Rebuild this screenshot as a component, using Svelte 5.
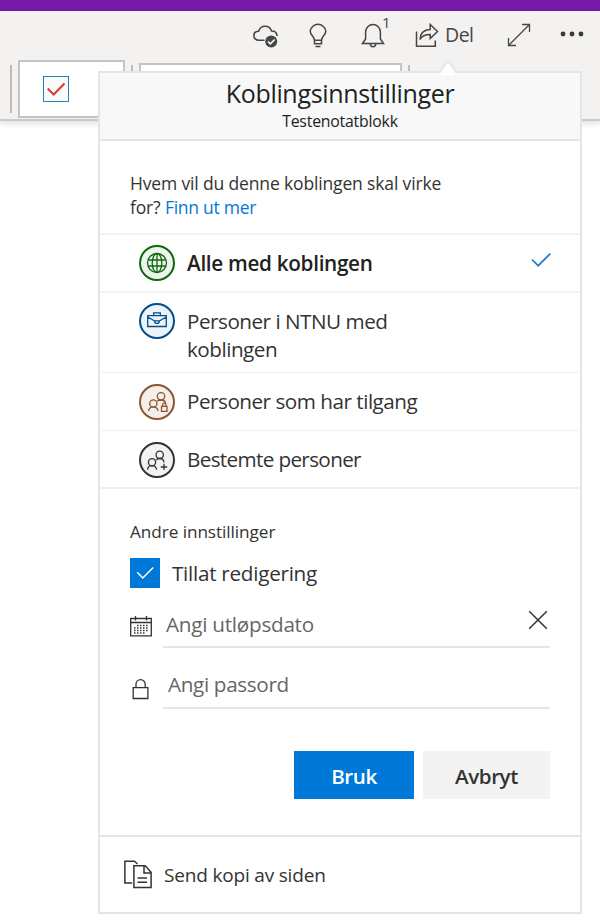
<script>
  const options = [
    { id: 'all', icon: 'globe', label: 'Alle med koblingen', color: '#0b6a0b', bg: '#f0f4f0', selected: true },
    { id: 'org', icon: 'case', label: 'Personer i NTNU med koblingen', color: '#004e8c', bg: '#eef3f7' },
    { id: 'existing', icon: 'lock', label: 'Personer som har tilgang', color: '#8e562e', bg: '#f5efeb' },
    { id: 'specific', icon: 'plus', label: 'Bestemte personer', color: '#333333', bg: '#f2f2f2' }
  ];
</script>

<div class="page">
  <div class="titlebar"></div>
  <header class="toolbar">
    <div class="actions">
      <svg class="cloud" width="28" height="28" viewBox="0 0 28 28" fill="none" stroke="#484644" stroke-width="1.6">
        <path d="M12.5 18.2H6.6C3.8 18.2 1.9 16.2 1.9 13.7c0-2.700 2-4.500 4.700-4.500C7.500 6.200 10 4.200 13 4.200c3.300 0 5.700 2 6.500 4.800 3.300 0 5.500 2 5.500 5" />
        <circle cx="19.200" cy="19.500" r="6" fill="#484644" stroke="none" />
        <path d="M16 19.500l2.400 2.400 4.300-4.400" stroke="#fff" />
      </svg>
      <svg class="bulb" width="22" height="28" viewBox="0 0 22 28" fill="none" stroke="#484644" stroke-width="1.5">
        <path d="M7.500 18.500c0-4.500-4.300-5-4.300-9.500a7.900 7.900 0 0 1 15.600 0c0 4.500-4.300 5-4.300 9.500v3.300h-7zM7.500 18.300h7M8.500 24.500h5" />
      </svg>
      <div class="bell">
        <svg width="24" height="28" viewBox="0 0 24 28" fill="none" stroke="#484644" stroke-width="1.5">
          <path d="M1.500 21.500L4.600 17V10a7.300 7.300 0 0 1 14.800 0V17l3.100 4.500zM9.300 22a2.700 2.700 0 0 0 5.400 0" />
        </svg>
        <span class="count">1</span>
      </div>
      <svg class="share" width="26" height="28" viewBox="0 0 26 28" fill="none" stroke="#484644" stroke-width="1.500">
        <path d="M2.500 9.500V24.300H21.300V18.500" />
        <path d="M6 17.500C6.300 10.500 10 7.700 16.200 7.400V2.500l7.300 7-7.300 7v-4c-4.500-.1-7.900 1-10.200 5z" />
      </svg>
      <span class="del">Del</span>
      <svg class="expand" width="26" height="28" viewBox="0 0 26 28" fill="none" stroke="#484644" stroke-width="1.300">
        <path d="M2.500 24.500L23.500 3.500M16 3.500h7.500v7.500M2.500 17v7.500h7.500" />
      </svg>
      <svg class="dots" width="26" height="28" viewBox="0 0 26 28" fill="#3b3a39">
        <circle cx="4" cy="13" r="2.400" /><circle cx="13" cy="13" r="2.400" /><circle cx="22" cy="13" r="2.400" />
      </svg>
    </div>
    <div class="ribbon">
      <i class="sep"></i>
      <div class="tag">
        <svg width="26" height="26" viewBox="0 0 26 26" fill="none">
          <rect x=".5" y=".5" width="25" height="25" fill="#fafafa" stroke="#1f86a3" />
          <path d="M4.700 12.500l6 6L21.500 7.500" stroke="#d43c2c" stroke-width="2" />
        </svg>
      </div>
      <i class="sep second"></i>
      <div class="search"></div>
      <i class="sep third"></i>
    </div>
  </header>

  <section class="panel">
    <svg class="caret" width="20" height="15" viewBox="0 0 20 15">
      <path d="M1.500 13L10 1l8.500 12v2h-17z" fill="#fff" />
      <path d="M1.500 13L9.200 1.500h1.600L18.500 13" fill="none" stroke="#e5e5e5" stroke-width="1.800" />
    </svg>
    <div class="head">
      <h1>Koblingsinnstillinger</h1>
      <h2>Testenotatblokk</h2>
    </div>

    <p class="intro">Hvem vil du denne koblingen skal virke<br />for? <span class="link">Finn ut mer</span></p>

    <ul>
      {#each options as o (o.id)}
        <li class={o.id}>
          <svg class="round" width="36" height="36" viewBox="0 0 36 36" fill="none" stroke={o.color} stroke-width="1.300">
            <circle cx="18" cy="18" r="17" fill={o.bg} stroke-width="2" />
            {#if o.icon === 'globe'}
              <circle cx="18" cy="18" r="9.500" />
              <ellipse cx="18" cy="18" rx="4.800" ry="9.500" />
              <path d="M18 8.500v19M9.200 15h17.600M9.200 21h17.600" />
            {:else if o.icon === 'case'}
              <path d="M8.700 12.700h18.600v10.800H8.700zM14.700 12.500v-2.700h6.600v2.700M8.700 14l7 4M27.300 14l-7 4M15.800 17.800h4.400v1.500l-1 1h-2.400l-1-1z" />
            {:else if o.icon === 'lock'}
              <circle cx="22" cy="12.300" r="3.700" />
              <circle cx="14.300" cy="19.500" r="3.600" />
              <path d="M9.600 27c.3-2.700 2-4.100 4.700-4.100s4.300 1.400 4.700 4.100M18.200 17.300c.8-.8 2-1.300 3.800-1.300 2.600 0 4.200 1 4.700 3M22.500 22.300h5.500v5h-5.500zM23.700 22.300v-1.600a1.600 1.600 0 0 1 3.200 0v1.600" />
            {:else}
              <circle cx="20.700" cy="12.800" r="3.700" />
              <circle cx="13" cy="20.300" r="3.600" />
              <path d="M8.500 27.700c.3-2.700 1.900-4 4.500-4s4.200 1.300 4.600 4M17 18c.8-.9 2-1.500 3.700-1.500 2.600 0 4 1.400 4.300 3.800M25 21.700v6.400M21.800 25h6.400" />
            {/if}
          </svg>
          <span class="name">{o.label}</span>
          {#if o.selected}
            <svg class="tick" width="22" height="18" viewBox="0 0 22 18" fill="none" stroke="#1a7fd4" stroke-width="1.700">
              <path d="M2 8.500l6.200 6.200L20.300 2.600" />
            </svg>
          {/if}
        </li>
      {/each}
    </ul>

    <div class="settings">
      <h3>Andre innstillinger</h3>
      <div class="edit">
        <svg width="30" height="30" viewBox="0 0 30 30">
          <path d="M0 0h30v30H0z" fill="#0078d7" />
          <path d="M7.200 14.300l5.600 5.700L23.200 9.500" fill="none" stroke="#fff" stroke-width="1.500" />
        </svg>
        <span>Tillat redigering</span>
      </div>
      <div class="field date">
        <svg width="22" height="21" viewBox="0 0 22 21" fill="none" stroke="#333">
          <path d="M.7 2.500h20.600v17.300H.7zM.7 6.500h20.600M5.500 0v4.500M16.500 0v4.500" stroke-width="1.300" />
          <path d="M7 9.500h11M4 12h14M4 14.500h14M4 17h11" stroke-width="1.400" stroke-dasharray="1.500 1.500" />
        </svg>
        <div class="input"><span>Angi utløpsdato</span>
          <svg class="close" width="20" height="20" viewBox="0 0 20 20" stroke="#333" stroke-width="1.500"><path d="M1.200 1.200l17.600 17.600M18.800 1.200L1.200 18.800" /></svg>
        </div>
      </div>
      <div class="field password">
        <svg width="22" height="22" viewBox="0 0 22 22" fill="none" stroke="#333" stroke-width="1.300">
          <path d="M3.200 9.700h14.700v10.800H3.200zM6 9.700V6.200a4.600 4.600 0 0 1 9.200 0v3.500" />
        </svg>
        <div class="input"><span>Angi passord</span></div>
      </div>
      <div class="buttons">
        <button class="apply">Bruk</button>
        <button class="cancel">Avbryt</button>
      </div>
    </div>

    <div class="foot">
      <svg width="28" height="29" viewBox="0 0 28 29" fill="none" stroke="#333" stroke-width="1.500">
        <path d="M8.200 23H.9V1.200h9.500L13.500 4M9.900 5.800h11.300l5.900 6.400v15.300H9.900zM20 5.800v7.200h7M13.500 18h9.500M13.500 22.300h9.500" />
      </svg>
      <span>Send kopi av siden</span>
    </div>
  </section>
</div>

<style>
  .page {
    position: relative;
    width: 600px;
    height: 924px;
    overflow: hidden;
    background: #fff;
    color: #333;
    font: 20.7px/28px 'Open Sans', 'Noto Sans', sans-serif;
    letter-spacing: -0.5px;
  }
  .page * { box-sizing: border-box; }
  svg { display: block; flex: none; }
  h1, h2, h3, p, ul { margin: 0; padding: 0; font-weight: 400; }
  .titlebar { height: 11px; background: #7719aa; }
  .toolbar {
    height: 110px;
    background: #f3f2f1;
    border-bottom: 2px solid #cccac8;
    box-shadow: 0 2px 7px rgba(0, 0, 0, 0.14);
  }
  .actions { display: flex; height: 49px; padding: 11px 0 0 252px; }
  .bulb { margin-left: 27px; }
  .bell { position: relative; margin-left: 32px; }
  .count { position: absolute; left: 21px; top: -10px; font-size: 15px; line-height: 20px; color: #484644; }
  .share { margin-left: 29px; }
  .del { margin-left: 5px; width: 31px; font-size: 19.5px; line-height: 25px; color: #484644; }
  .expand { margin-left: 30px; margin-top: -1px; }
  .dots { margin-left: 27px; margin-top: -1px; }
  .ribbon { display: flex; height: 59px; padding-left: 10px; }
  .sep { width: 2px; height: 48px; margin-top: 5px; background: #bebcba; flex: none; }
  .tag { width: 107px; height: 58px; margin-left: 6px; padding: 14px 23px; background: #fff; border: 2px solid #c6c4c2; }
  .second, .search, .third { margin-left: 6px; }
  .search { width: 263px; height: 50px; margin-top: 3px; background: #fff; border: 2px solid #c6c4c2; }

  .panel {
    position: absolute;
    left: 98px;
    top: 71px;
    width: 484px;
    height: 843px;
    background: #fff;
    border: 2px solid #e5e5e5;
  }
  .caret { position: absolute; left: 338px; top: -13px; }
  .head { height: 68px; padding-top: 3px; text-align: center; background: #f8f8f8; border-bottom: 2px solid #e5e5e5; color: #212121; }
  h1 { font-size: 25px; line-height: 34px; letter-spacing: -0.32px; }
  h2 { margin-top: 2px; font-size: 15.8px; line-height: 19px; letter-spacing: -0.2px; }
  .intro { height: 94px; padding: 30px 0 0 30px; font-size: 17.500px; line-height: 24px; letter-spacing: -0.15px; border-bottom: 2px solid #f3f3f3; }
  .link { color: #0078d7; letter-spacing: -0.27px; }
  ul { list-style: none; }
  li { display: flex; height: 58px; padding: 11px 28px 0 39px; border-bottom: 1px solid #f0f0f0; }
  .all { padding-top: 10px; border-bottom: 2px solid #f3f3f3; color: #212121; }
  .org { height: 80px; padding-top: 10px; }
  .specific { border-bottom: 2px solid #f0f0f0; letter-spacing: -0.66px; }
  .name { width: 232px; margin: 3px 0 0 12px; white-space: nowrap; }
  .org .name { white-space: normal; width: 210px; margin-top: 4px; }
  .all .name { margin-top: 4px; font-weight: 600; letter-spacing: -0.3px; }
  .tick { margin: 6px 0 0 auto; }

  .settings { height: 348px; padding: 29px 30px 0; border-bottom: 2px solid #e5e5e5; }
  h3 { font-size: 17.200px; line-height: 28px; letter-spacing: -0.07px; }
  .edit { display: flex; margin-top: 12px; letter-spacing: -0.28px; }
  .edit span { margin: 1px 0 0 12px; }
  .field { display: flex; color: #666; letter-spacing: -0.26px; }
  .input { display: flex; justify-content: space-between; width: 387px; margin-left: auto; border-bottom: 2px solid #e6e6e6; }
  .date { height: 45px; margin-top: 15px; }
  .date > svg { margin-top: 13px; }
  .date .input { padding: 7px 2px 0 3px; }
  .password { height: 46px; margin-top: 15px; }
  .password > svg { margin-top: 15px; }
  .password .input { padding: 7px 0 0 5px; letter-spacing: -0.35px; }
  .buttons { display: flex; justify-content: flex-end; gap: 9px; margin-top: 42px; }
  button { height: 48px; padding: 2px 0 0; border: 0; font: 600 20.6px/28px 'Open Sans', 'Noto Sans', sans-serif; letter-spacing: -0.45px; }
  .apply { width: 120px; color: #fff; background: #0078d7; }
  .cancel { width: 127px; color: #333; background: #f3f3f3; }
  .foot { display: flex; padding: 23px 0 0 24px; font-size: 19px; letter-spacing: -0.18px; }
  .foot span { margin: 1px 0 0 12px; }
</style>
